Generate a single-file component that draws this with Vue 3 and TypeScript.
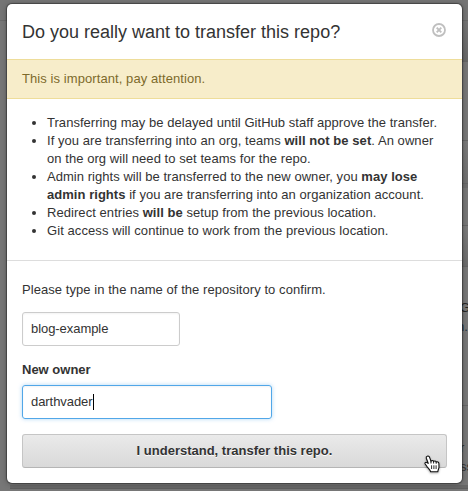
<script setup lang="ts">
import { ref } from 'vue'

const repository = ref<string>('blog-example')
const owner = ref<string>('darthvader')
</script>

<template>
  <main class="page">
    <div class="behind" aria-hidden="true">
      <div class="strip s1"></div>
      <div class="strip s2"></div>
      <div class="strip s3"></div>
      <div class="strip s4"></div>
      <div class="strip s5"></div>
      <div class="strip s6"></div>
      <div class="strip s7"><span class="bit g">G</span><span class="bit link">n.</span></div>
      <div class="strip s8"><span class="bit r">r</span><span class="bit ss">ss</span></div>
      <div class="bottom-edge"></div>
    </div>

    <section class="dialog" role="dialog">
      <header class="head">
        <h2>Do you really want to transfer this repo?</h2>
        <button class="close" aria-label="Close">
          <svg width="14" height="14" viewBox="0 0 14 14">
            <circle cx="7" cy="7" r="6" fill="none" stroke="#bfbfbf" stroke-width="1.8" />
            <path d="M4.7 4.7 9.3 9.3M9.3 4.7 4.7 9.3" stroke="#bfbfbf" stroke-width="1.9" />
          </svg>
        </button>
      </header>
      <p class="warning">This is important, pay attention.</p>
      <ul class="notes">
        <li class="tight">Transferring may be delayed until GitHub staff approve the transfer.</li>
        <li>If you are transferring into an org, teams <strong>will not be set</strong>. An owner<br />on the org will need to set teams for the repo.</li>
        <li class="tight">Admin rights will be transferred to the new owner, you <strong>may lose<br />admin rights</strong> if you are transferring into an organization account.</li>
        <li>Redirect entries <strong>will be</strong> setup from the previous location.</li>
        <li class="loose">Git access will continue to work from the previous location.</li>
      </ul>
      <form class="confirm" @submit.prevent>
        <p class="prompt">Please type in the name of the repository to confirm.</p>
        <div class="field repo">{{ repository }}</div>
        <div class="label">New owner</div>
        <div class="field focused">{{ owner }}<i class="caret"></i></div>
        <button class="submit">I understand, transfer this repo.</button>
      </form>
    </section>

    <svg class="pointer" width="17" height="18" viewBox="0 0 17 18">
      <path
        d="M3.2 1.2C4.3.7 5.2 1.3 5.6 2.4L7 6.3C7.5 5.3 9.2 5.2 9.6 6.5 10.4 5.6 11.9 5.8 12.2 7 13.4 6.4 14.8 7.1 14.9 8.5L15 12.2C15 13.5 14.1 14.2 13.8 16.7H6.6C6.3 14.8 4.2 13.2 2.8 11.3L1.2 9C.3 7.5 2 6.7 3.3 7.7L4.4 8.7 2.3 3.2C2 2.3 2.4 1.5 3.2 1.2Z"
        fill="#fff"
        stroke="#111"
        stroke-width="1.1"
      />
      <path d="M7.6 10.3V14M9.9 10.3V14M12.1 10.3V14M7 6.3V8.5M9.6 6.5V8.5M12.2 7V8.8" stroke="#111" stroke-width=".9" />
    </svg>
  </main>
</template>

<style>
body {
  margin: 0;
  overflow: hidden;
}
</style>

<style scoped>
.page {
  position: relative;
  box-sizing: border-box;
  width: 468px;
  height: 491px;
  padding: 4px 6px 8px 7px;
  overflow: hidden;
  background: #777;
  color: #333;
  font: 13px/18px "Liberation Sans", Arial, sans-serif;
}

.behind {
  position: absolute;
  inset: 0;
  display: flex;
  flex-direction: column;
}

.strip {
  position: relative;
  box-sizing: border-box;
  flex: none;
  margin-left: 440px;
  border-bottom: 1px solid #666;
}
.s1 { height: 21px; margin-left: 0; background: #757575; border-bottom-color: #6a6a6a; }
.s2 { height: 41px; background: linear-gradient(#747474, #686868); }
.s3 { height: 79px; }
.s4 { height: 43px; background: linear-gradient(#797979, #707070); }
.s5 { height: 42px; border-top: 4px solid #6f6f6f; }
.s6 { height: 41px; background: linear-gradient(#7a7a7a, #6c6c6c); }
.s7 { height: 139px; }
.s8 { height: 79px; border-bottom: 0; }

.bit { position: absolute; }
.g { left: 20px; top: 32px; color: #242424; }
.link { left: 17px; top: 51px; color: #24303f; }
.r { left: 20px; top: 33px; color: #333; }
.ss { left: 20px; top: 52px; color: #333; }

.bottom-edge {
  flex: none;
  height: 3px;
  margin-left: 10px;
  background: #686868;
  border-bottom: 1px solid #5f5f5f;
}

.dialog {
  position: relative;
  box-sizing: border-box;
  width: 455px;
  height: 479px;
  border-radius: 5px;
  background: #fff;
  box-shadow: 0 0 1px 1px rgba(0, 0, 0, 0.35), 0 1px 6px rgba(0, 0, 0, 0.3);
}

.head {
  display: flex;
  box-sizing: border-box;
  height: 55px;
  padding: 16px 15px 0;
  justify-content: space-between;
}
h2 {
  margin: 0;
  font-size: 18px;
  font-weight: 400;
  line-height: 24px;
}
.close {
  width: 14px;
  height: 14px;
  margin: 3px 1px 0 0;
  padding: 0;
  border: 0;
  background: none;
}
.close svg { display: block; }

.warning {
  box-sizing: border-box;
  height: 40px;
  margin: 0;
  padding: 10px 15px;
  border: solid #eedd9a;
  border-width: 1px 0;
  background: #f7edca;
  color: #7d6a2b;
  letter-spacing: 0.08px;
}

.notes {
  box-sizing: border-box;
  height: 162px;
  margin: 0;
  padding: 15px 0 0 40px;
  border-bottom: 1px solid #ddd;
  letter-spacing: 0.06px;
  white-space: nowrap;
}
.tight { letter-spacing: 0.04px; }
.loose { letter-spacing: 0.08px; }

.confirm {
  display: flex;
  flex-direction: column;
  padding: 20px 15px 0;
}
.prompt {
  margin: 0 0 13px;
  letter-spacing: 0.06px;
}

.field {
  box-sizing: border-box;
  display: flex;
  align-items: center;
  height: 34px;
  padding: 0 8px;
  border: 1px solid #ccc;
  border-radius: 3px;
  box-shadow: inset 0 1px 2px rgba(0, 0, 0, 0.05);
}
.repo {
  width: 158px;
  letter-spacing: -0.06px;
}
.focused {
  width: 250px;
  border-color: #51a7e8;
  box-shadow: inset 0 1px 2px rgba(0, 0, 0, 0.05), 0 0 4px rgba(81, 167, 232, 0.45);
  letter-spacing: -0.06px;
}
.caret {
  width: 1px;
  height: 16px;
  background: #000;
}
.label {
  margin: 15px 0 6px;
  font-weight: 700;
}
.submit {
  height: 34px;
  margin-top: 15px;
  padding: 0;
  border: 1px solid #c5c5c5;
  border-bottom-color: #b5b5b5;
  border-radius: 3px;
  background: linear-gradient(#eaeaea, #d9d9d9);
  color: #333;
  font: 700 13px/18px "Liberation Sans", Arial, sans-serif;
  text-shadow: 0 1px 0 rgba(255, 255, 255, 0.9);
}

.pointer {
  position: absolute;
  left: 424px;
  top: 455px;
  filter: drop-shadow(0 1px 1px rgba(0, 0, 0, 0.35));
}
</style>
